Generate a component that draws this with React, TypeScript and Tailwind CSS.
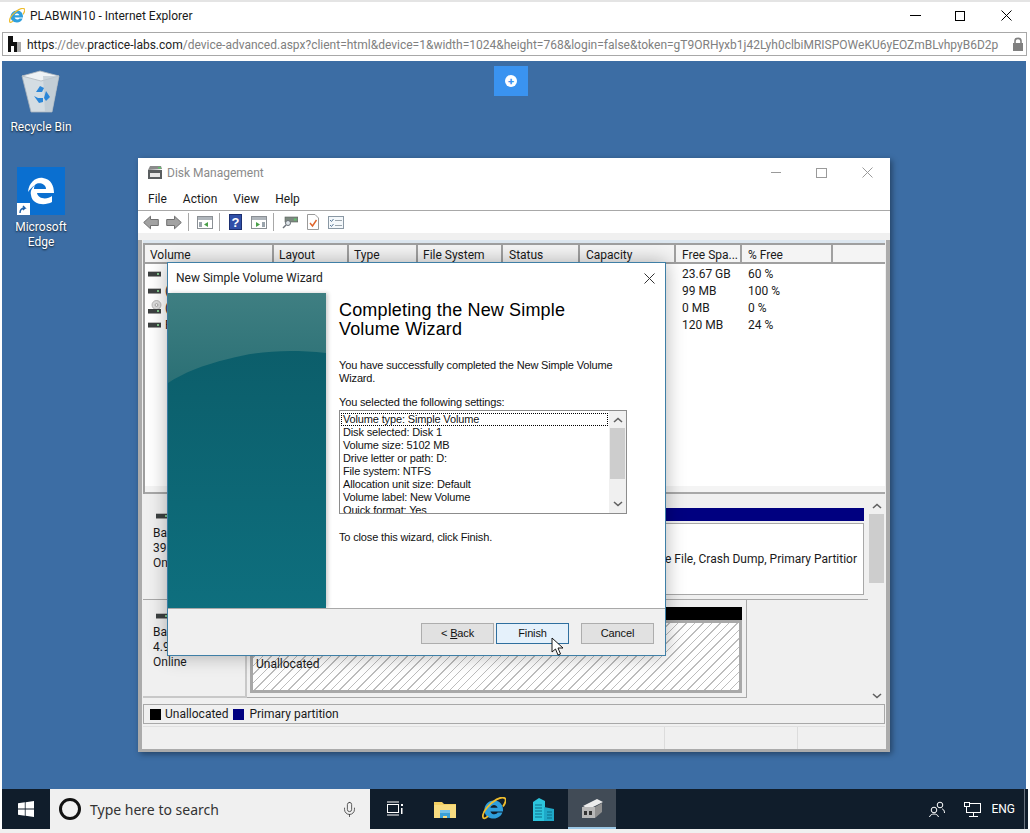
import { Mic } from "lucide-react";

const columns = [
  { name: "Volume", cell: "w-[129px] pl-[5px]" },
  { name: "Layout", cell: "w-[75px] pl-[5px]" },
  { name: "Type", cell: "w-[69px] pl-[5px]" },
  { name: "File System", cell: "w-[85px] pl-[5px]" },
  { name: "Status", cell: "w-[77px] pl-[6px]" },
  { name: "Capacity", cell: "w-[96px] pl-[6px]" },
  { name: "Free Spa...", cell: "w-[66px] pl-[6px]" },
  { name: "% Free", cell: "w-[91px] pl-[6px]" },
];

const volumes = [
  { letter: "", free: "23.67 GB", pct: "60 %", disc: false },
  { letter: "(", free: "99 MB", pct: "100 %", disc: false },
  { letter: "(", free: "0 MB", pct: "0 %", disc: true },
  { letter: "F", free: "120 MB", pct: "24 %", disc: false },
];

const settings = [
  "Disk selected: Disk 1",
  "Volume size: 5102 MB",
  "Drive letter or path: D:",
  "File system: NTFS",
  "Allocation unit size: Default",
  "Volume label: New Volume",
  "Quick format: Yes",
];

function DriveIcon() {
  return (
    <svg width="13" height="6" viewBox="0 0 13 6" className="block">
      <rect x="0" y="0" width="13" height="1" fill="#bdbdbd" />
      <rect x="0" y="1" width="13" height="4" fill="#3c4040" />
      <rect x="9" y="2" width="2" height="2" fill="#7fc48a" />
      <rect x="0" y="5" width="13" height="1" fill="#9a9a9a" />
    </svg>
  );
}

function DiscIcon() {
  return (
    <svg width="14" height="15" viewBox="0 0 14 15" className="block">
      <circle cx="8.5" cy="5" r="4.5" fill="#dcdcdc" stroke="#a0a0a0" strokeWidth="0.7" />
      <circle cx="8.5" cy="5" r="1.4" fill="#fff" stroke="#8a8a8a" strokeWidth="0.7" />
      <rect x="0" y="9" width="13" height="4" fill="#3c4040" />
      <rect x="9" y="10" width="2" height="2" fill="#7fc48a" />
      <rect x="0" y="13" width="13" height="1" fill="#9a9a9a" />
    </svg>
  );
}

function IeIcon({ size }: { size: number }) {
  return (
    <svg width={size} height={size} viewBox="0 0 20 20" className="shrink-0">
      <path d="M10 3 C5 3 2 7 2 11 C2 15 5 18 10 18 C13 18 16 16 17 13 L13 13 C12 15 8 15 7 12 L17.5 12 C18 7 15 3 10 3 Z M7 9 C8 6 12 6 13 9 Z" fill="#2f9fdc" fillRule="evenodd" />
      <path d="M5 16 C0 21 -1 15 4 9 C9 3 16 -1 19 1 C20.5 2 19.5 5 17.5 8" fill="none" stroke="#eebd2e" strokeWidth="1.5" />
    </svg>
  );
}

function RecycleBin() {
  return (
    <svg width="40" height="44" viewBox="0 0 40 44">
      <path d="M1 6 L38 6 L31 42 L10 42 Z" fill="#d4dde3" stroke="#aab4bc" strokeWidth="0.8" />
      <path d="M1 6 L19 1 L38 6 L20 11 Z" fill="#eef2f5" stroke="#b0b8be" strokeWidth="0.8" />
      <path d="M22 6 L38 6 L31 42 L24 42 Z" fill="#bcc8d0" opacity="0.7" />
      <path d="M15 22 L19 16 L23 18 L21 22 Z M25 21 L29 27 L25 31 L23 28 Z M13 26 L18 33 L22 32 L22 28 L17 28 Z" fill="#2a86d8" />
    </svg>
  );
}

function ToolbarIcons() {
  return (
    <div className="flex items-center h-[22px] pl-[5px]">
      <svg width="16" height="15" viewBox="0 0 16 15">
        <path d="M0.7 7.5 L7.5 1.2 L7.5 4.5 L15.3 4.5 L15.3 10.5 L7.5 10.5 L7.5 13.8 Z" fill="#a2a2a2" stroke="#707070" />
      </svg>
      <svg width="16" height="15" viewBox="0 0 16 15" className="ml-[7px]">
        <path d="M15.3 7.5 L8.5 1.2 L8.5 4.5 L0.7 4.5 L0.7 10.5 L8.5 10.5 L8.5 13.8 Z" fill="#a2a2a2" stroke="#707070" />
      </svg>
      <div className="w-px h-[18px] bg-[#a8a8a8] ml-[6px]" />
      <svg width="16" height="13" viewBox="0 0 16 13" className="ml-[8px]">
        <rect x="0.5" y="0.5" width="15" height="12" fill="#fff" stroke="#8a8f94" />
        <rect x="1" y="1" width="14" height="3" fill="#b0b6bc" />
        <rect x="2" y="6" width="3" height="5" fill="#9aa4ac" />
        <path d="M11 6 L11 11 L7 8.5 Z" fill="#4aa04a" />
      </svg>
      <div className="w-px h-[18px] bg-[#a8a8a8] ml-[6px]" />
      <div className="w-[13px] h-[16px] ml-[9px] bg-[#2f4fa8] border border-[#1c2f70] flex items-center justify-center text-white text-[13px] font-bold leading-none font-['Liberation_Sans',sans-serif]">
        ?
      </div>
      <svg width="16" height="13" viewBox="0 0 16 13" className="ml-[9px]">
        <rect x="0.5" y="0.5" width="15" height="12" fill="#fff" stroke="#8a8f94" />
        <rect x="1" y="1" width="14" height="3" fill="#b0b6bc" />
        <rect x="11" y="6" width="3" height="5" fill="#9aa4ac" />
        <path d="M5 6 L5 11 L9 8.5 Z" fill="#4aa04a" />
      </svg>
      <div className="w-px h-[18px] bg-[#a8a8a8] ml-[6px]" />
      <svg width="16" height="14" viewBox="0 0 16 14" className="ml-[8px]">
        <rect x="3" y="2" width="13" height="5" fill="#7d8a80" stroke="#5a625c" strokeWidth="0.6" />
        <rect x="12" y="3.5" width="2.5" height="2" fill="#5fc46a" />
        <circle cx="6" cy="8" r="2.5" fill="#dfe6ea" stroke="#6a7078" />
        <path d="M1 13 L4 10" stroke="#6a7078" strokeWidth="1.4" />
      </svg>
      <svg width="12" height="16" viewBox="0 0 12 16" className="ml-[9px]">
        <path d="M0.5 0.5 L8 0.5 L11.5 4 L11.5 15.5 L0.5 15.5 Z" fill="#fff" stroke="#9a9a9a" />
        <path d="M3 9 L5.5 12 L9.5 6" fill="none" stroke="#e0642a" strokeWidth="1.4" />
      </svg>
      <svg width="16" height="13" viewBox="0 0 16 13" className="ml-[9px]">
        <rect x="0.5" y="0.5" width="15" height="12" fill="#f4f8fb" stroke="#8a98a4" />
        <path d="M2 4 L3.5 5.5 L5.5 3 M2 9 L3.5 10.5 L5.5 8" fill="none" stroke="#5a7a9a" />
        <path d="M7 4.5 L14 4.5 M7 9.5 L14 9.5" stroke="#9aa4ac" />
      </svg>
    </div>
  );
}

function ScrollUp() {
  return (
    <svg width="10" height="6" viewBox="0 0 10 6">
      <path d="M1 5 L5 1.5 L9 5" fill="none" stroke="#606060" strokeWidth="1.6" />
    </svg>
  );
}

function ScrollDown() {
  return (
    <svg width="10" height="6" viewBox="0 0 10 6">
      <path d="M1 1 L5 4.5 L9 1" fill="none" stroke="#606060" strokeWidth="1.6" />
    </svg>
  );
}

function DiskWindow() {
  return (
    <div className="absolute left-[136px] top-[97px] w-[752px] h-[594px] bg-[#f0f0f0] flex flex-col shadow-[2px_2px_6px_rgba(0,0,0,0.4)] text-[12px] text-[#1a1a1a] font-['Roboto',sans-serif]">
      <div className="bg-white h-[29px] flex items-center pl-[9px] shrink-0">
        <svg width="16" height="15" viewBox="0 0 16 15">
          <path d="M3 1 L14 1 L15 4 L1 5 Z" fill="#8a8a8a" />
          <rect x="1" y="5" width="14" height="9" fill="#5a5e60" />
          <rect x="3" y="8" width="10" height="4" fill="#e8e8e8" />
          <rect x="11" y="2" width="3" height="1.5" fill="#5fc46a" />
        </svg>
        <span className="ml-[4px] text-[#8a8a8a]">Disk Management</span>
        <div className="ml-auto flex items-center pr-[17px]">
          <div className="w-[10px] h-px bg-[#9a9a9a] mr-[35px]" />
          <div className="w-[11px] h-[10px] border border-[#9a9a9a] mr-[35px]" />
          <svg width="11" height="11" viewBox="0 0 11 11">
            <path d="M0.5 0.5 L10.5 10.5 M10.5 0.5 L0.5 10.5" stroke="#9a9a9a" />
          </svg>
        </div>
      </div>
      <div className="bg-white h-[24px] flex items-center pl-[10px] gap-[16px] border-b border-[#a8a8a8] shrink-0">
        <span>File</span>
        <span>Action</span>
        <span>View</span>
        <span>Help</span>
      </div>
      <div className="bg-white h-[22px] shrink-0">
        <ToolbarIcons />
      </div>
      <div className="h-[7px] shrink-0" />
      <div className="flex-1 min-h-0 flex flex-col border-x-[4px] border-b-[3px] border-[#ababab] px-[1px]">
        <div className="h-[3px] bg-[#dce6ef] shrink-0" />
        <div className="h-[251px] bg-white border-t-[2px] border-l-[2px] border-[#9f9f9f] flex flex-col shrink-0">
          <div className="flex h-[19px] bg-[#f4f4f4] border-b-[2px] border-[#a0a0a0] shrink-0">
            {columns.map((c) => (
              <div key={c.name} className={`${c.cell} pt-px border-r-[2px] border-[#a0a0a0] leading-[18px] whitespace-nowrap`}>
                {c.name}
              </div>
            ))}
          </div>
          <div className="flex-1 pt-[1px] flex flex-col">
            {volumes.map((v) => (
              <div key={v.free} className="h-[17px] flex items-center">
                <div className="w-[20px] pl-[3px]">{v.disc ? <DiscIcon /> : <DriveIcon />}</div>
                <div className="w-[517px]">{v.letter}</div>
                <div className="w-[66px]">{v.free}</div>
                <div>{v.pct}</div>
              </div>
            ))}
          </div>
          <div className="h-[8px] bg-[#f4f4f4] border-b-[2px] border-[#a8a8a8]" />
        </div>
        <div className="h-[3px] shrink-0" />
        <div className="h-[203px] flex shrink-0">
          <div className="flex-1 min-w-0 flex flex-col">
            <div className="h-[103px] flex border-b border-[#a8a8a8] shrink-0">
              <div className="w-[104px] pl-[10px] pt-[16px] leading-[15px] shrink-0">
                <div className="ml-[3px]"><DriveIcon /></div>
                <div className="mt-[7px]">Basic</div>
                <div>39.97 GB</div>
                <div>Online</div>
              </div>
              <div className="flex-1 pr-[4px] pt-[11px] flex flex-col min-w-0">
                <div className="h-[13px] bg-[#000080] shrink-0" />
                <div className="h-[72px] bg-white border border-[#a8a8a8] mt-[2px] flex items-center justify-end overflow-hidden pr-[6px] shrink-0">
                  <span className="whitespace-nowrap">Page File, Crash Dump, Primary Partitior</span>
                </div>
              </div>
            </div>
            <div className="flex-1 flex min-h-0 items-start">
              <div className="w-[104px] h-[98px] pl-[10px] pt-[13px] leading-[15px] shrink-0 border-r-[2px] border-b-[2px] border-[#c8c8c8]">
                <div className="ml-[3px]"><DriveIcon /></div>
                <div className="mt-[6px]">Basic</div>
                <div>4.98 GB</div>
                <div>Online</div>
              </div>
              <div className="w-[500px] h-[98px] border-r border-b border-[#a8a8a8] pl-[3px] pr-[4px] pt-[7px] flex flex-col shrink-0">
                <div className="h-[13px] bg-black shrink-0" />
                <div className="h-[73px] border-[3px] border-[#a8a8a8] bg-[repeating-linear-gradient(135deg,#bdbdbd_0,#bdbdbd_1px,#ffffff_1px,#ffffff_6px)] pl-[3px] pt-[34px] leading-[15px]">
                  <span>Unallocated</span>
                </div>
              </div>
            </div>
          </div>
          <div className="w-[17px] flex flex-col items-center justify-between pt-[6px] pb-[1px] shrink-0">
            <ScrollUp />
            <div className="w-[15px] h-[69px] bg-[#cdcdcd] mb-auto mt-[5px]" />
            <ScrollDown />
          </div>
        </div>
        <div className="h-[4px] shrink-0" />
        <div className="h-[20px] border border-[#a8a8a8] flex items-center pl-[6px] shrink-0">
          <div className="w-[11px] h-[11px] bg-black" />
          <span className="ml-[4px]">Unallocated</span>
          <div className="w-[11px] h-[11px] bg-[#000080] ml-[5px]" />
          <span className="ml-[5px]">Primary partition</span>
        </div>
        <div className="h-[25px] mt-[2px] flex-1 flex justify-end border-t border-[#e0e0e0]">
          <div className="w-[133px] border-l border-[#dcdcdc]" />
          <div className="w-[88px] border-l border-[#dcdcdc]" />
        </div>
      </div>
    </div>
  );
}

function WizardDialog() {
  return (
    <div className="absolute left-[165px] top-[201px] w-[499px] h-[394px] bg-white border border-[#3f7fa6] flex flex-col shadow-[0_0_18px_rgba(0,0,0,0.3)] font-['Liberation_Sans',sans-serif] text-[11px] tracking-[-0.15px] text-[#111]">
      <div className="h-[30px] flex items-center pl-[8px] shrink-0">
        <span className="font-['Roboto',sans-serif] text-[12px] tracking-normal text-[#222]">New Simple Volume Wizard</span>
        <svg width="11" height="11" viewBox="0 0 11 11" className="ml-auto mr-[10px]">
          <path d="M0.5 0.5 L10.5 10.5 M10.5 0.5 L0.5 10.5" stroke="#333" />
        </svg>
      </div>
      <div className="flex-1 flex min-h-0">
        <div className="w-[158px] shrink-0 relative overflow-hidden bg-[linear-gradient(to_bottom,#0b5a66,#0e6f7e)] shadow-[2px_0_4px_rgba(0,0,0,0.2)]">
          <svg width="158" height="92" viewBox="0 0 158 92" className="absolute left-0 top-0">
            <defs>
              <linearGradient id="wave" x1="0" y1="0" x2="0" y2="1">
                <stop offset="0" stopColor="#3f7f82" />
                <stop offset="1" stopColor="#2b7075" />
              </linearGradient>
            </defs>
            <path d="M0 0 L158 0 L158 60 C120 56 90 58 60 66 C35 72 15 80 0 90 Z" fill="url(#wave)" />
          </svg>
        </div>
        <div className="flex-1 pl-[13px] pr-[38px] min-w-0">
          <h1 className="mt-[8px] w-[260px] text-[18px] tracking-[0.16px] leading-[19px] text-black">Completing the New Simple Volume Wizard</h1>
          <p className="mt-[20px] leading-[13px]">You have successfully completed the New Simple Volume Wizard.</p>
          <p className="mt-[11px] leading-[13px]">You selected the following settings:</p>
          <div className="mt-[1px] w-[288px] h-[104px] border border-[#8c8c8c] flex overflow-hidden">
            <div className="flex-1 min-w-0 pt-[2px] leading-[13px] overflow-hidden">
              <div className="border border-dotted border-black h-[13px] mx-[1px] pl-[1px] leading-[11px] whitespace-nowrap">Volume type: Simple Volume</div>
              {settings.map((s) => (
                <div key={s} className="pl-[3px] whitespace-nowrap">{s}</div>
              ))}
            </div>
            <div className="w-[17px] bg-[#f0f0f0] flex flex-col items-center justify-between py-[6px] shrink-0">
              <ScrollUp />
              <div className="w-[15px] h-[51px] bg-[#cdcdcd] mb-auto mt-[5px]" />
              <ScrollDown />
            </div>
          </div>
          <p className="mt-[17px] leading-[13px]">To close this wizard, click Finish.</p>
        </div>
      </div>
      <div className="h-[47px] bg-[#f0f0f0] border-t border-[#a8a8a8] flex items-start justify-end pt-[14px] pr-[11px] shrink-0 relative">
        <button className="w-[73px] h-[21px] bg-[#e1e1e1] border border-[#adadad] leading-[17px]">&lt; <span className="underline">B</span>ack</button>
        <button className="w-[73px] h-[21px] ml-[2px] bg-[#e5f1fb] border border-[#2f6f9f] leading-[17px]">Finish</button>
        <button className="w-[73px] h-[21px] ml-[12px] bg-[#e1e1e1] border border-[#adadad] leading-[17px]">Cancel</button>
        <svg width="13" height="19" viewBox="0 0 13 19" className="absolute left-[383px] top-[28px]">
          <path d="M1 1 L1 15 L4.5 12 L7 18 L9.5 17 L7 11 L12 11 Z" fill="#fff" stroke="#000" strokeWidth="0.9" />
        </svg>
      </div>
    </div>
  );
}

function Taskbar() {
  return (
    <div className="h-[40px] mx-[2px] bg-[#101d2b] flex items-stretch shrink-0 font-['Noto_Sans',sans-serif]">
      <div className="w-[48px] flex items-center justify-center">
        <svg width="16" height="16" viewBox="0 0 16 16">
          <path d="M0 2.3 L6.8 1.3 L6.8 7.6 L0 7.6 Z M7.6 1.2 L16 0 L16 7.6 L7.6 7.6 Z M0 8.4 L6.8 8.4 L6.8 14.7 L0 13.7 Z M7.6 8.4 L16 8.4 L16 16 L7.6 14.8 Z" fill="#fff" />
        </svg>
      </div>
      <div className="w-[320px] bg-[#f0f0f0] flex items-center pl-[9px] pr-[12px]">
        <div className="w-[22px] h-[22px] rounded-full border-[3px] border-[#111] bg-[#f0f0f0]" />
        <span className="ml-[9px] text-[14px] text-[#333]">Type here to search</span>
        <Mic size={17} strokeWidth={1} className="ml-auto text-[#222]" />
      </div>
      <div className="w-[50px] flex items-center justify-center">
        <svg width="18" height="16" viewBox="0 0 18 16">
          <rect x="1.5" y="3.5" width="11" height="8" fill="none" stroke="#fff" />
          <path d="M1 1 L13 1 M1 14 L13 14" stroke="#fff" />
          <rect x="15" y="3" width="2" height="2" fill="#fff" />
          <rect x="15" y="7" width="1.5" height="6" fill="#fff" />
        </svg>
      </div>
      <div className="w-[50px] flex items-center justify-center">
        <svg width="22" height="18" viewBox="0 0 22 18">
          <path d="M0 2 L8 2 L10 4 L22 4 L22 18 L0 18 Z" fill="#f3cf62" />
          <rect x="0" y="5" width="22" height="13" fill="#f8dc80" />
          <path d="M6 13 L16 13 L16 18 L13 18 L13 16 L9 16 L9 18 L6 18 Z" fill="#3aa0d8" />
          <rect x="6" y="10" width="10" height="3" fill="#74c0e8" />
        </svg>
      </div>
      <div className="w-[48px] flex items-center justify-center">
        <IeIcon size={24} />
      </div>
      <div className="w-[50px] flex items-center justify-center">
        <svg width="22" height="23" viewBox="0 0 22 23">
          <path d="M1 4 L7 0 L13 3 L13 23 L1 23 Z" fill="#2cc4dc" />
          <path d="M12 9 L22 11 L22 23 L12 23 Z" fill="#1fa8c8" />
          <path d="M3 7 L10 7 M3 10 L10 10 M3 13 L10 13 M3 16 L10 16 M3 19 L10 19 M15 14 L20 14 M15 17 L20 17 M15 20 L20 20" stroke="#0c6f8a" strokeWidth="1.2" />
        </svg>
      </div>
      <div className="w-[48px] bg-[#414b56] border-b-[2px] border-[#9cc8e6] flex items-center justify-center">
        <svg width="22" height="21" viewBox="0 0 22 21">
          <path d="M2 8 L16 1 L22 4 L8 11 Z" fill="#ececec" />
          <path d="M1 9 L14 9 L14 20 L1 20 Z" fill="#b8b8b8" />
          <rect x="3" y="13" width="3" height="4" fill="#333" />
          <rect x="8" y="13" width="3" height="4" fill="#333" />
          <path d="M14 9 L21 5 L21 14 L14 20 Z" fill="#8f8f8f" />
        </svg>
      </div>
      <div className="ml-auto flex items-center text-white pr-[9px]">
        <svg width="16" height="17" viewBox="0 0 16 17" className="mr-[19px]">
          <circle cx="11" cy="4" r="2.8" fill="none" stroke="#fff" />
          <circle cx="5" cy="9" r="2.8" fill="none" stroke="#fff" />
          <path d="M0.5 16 C1.5 12 8.5 12 9.5 16 M13 8 C14 8 15.5 9 15.5 12" fill="none" stroke="#fff" />
        </svg>
        <svg width="17" height="15" viewBox="0 0 17 15" className="mr-[10px]">
          <rect x="2.5" y="1.5" width="14" height="9" fill="none" stroke="#fff" />
          <rect x="0.5" y="0.5" width="5" height="4" fill="#101d2b" stroke="#fff" />
          <path d="M9.5 11 L9.5 14 M5 14.5 L14 14.5" stroke="#fff" />
        </svg>
        <span className="text-[12px] font-['Roboto',sans-serif]">ENG</span>
      </div>
      <div className="w-px bg-[#6a7480] mr-[3px]" />
    </div>
  );
}

export default function App() {
  return (
    <div className="w-[1030px] h-[833px] bg-white flex flex-col border-t-2 border-[#e4e4e4] overflow-hidden font-['Roboto',sans-serif] text-[#1a1a1a]">
      <div className="h-[27px] mb-[3px] flex items-center pl-[9px] shrink-0">
        <IeIcon size={16} />
        <span className="ml-[5px] text-[12px]">PLABWIN10 - Internet Explorer</span>
        <div className="ml-auto flex items-center pr-[18px]">
          <div className="w-[11px] h-px bg-black mr-[34px]" />
          <div className="w-[10px] h-[10px] border border-black mr-[36px]" />
          <svg width="11" height="11" viewBox="0 0 11 11">
            <path d="M0.5 0.5 L10.5 10.5 M10.5 0.5 L0.5 10.5" stroke="#000" />
          </svg>
        </div>
      </div>
      <div className="h-[24px] mx-[2px] w-[1025px] border border-[#a8a8a8] flex items-center pl-[4px] pr-[1px] shrink-0">
        <svg width="15" height="16" viewBox="0 0 15 16" className="shrink-0">
          <path d="M1 0 L6 0 L6 6 L10 6 L10 16 L7 16 L7 10 L4 10 L4 16 L1 16 Z" fill="#111" />
          <rect x="10" y="6" width="4" height="10" fill="#aaa" />
        </svg>
        <span className="ml-[5px] pt-px text-[12px] whitespace-nowrap text-[#808080]">
          <span className="text-[#222]">https</span>://dev.<span className="text-[#222]">practice-labs.com</span>/device-advanced.aspx?client=html&amp;device=1&amp;width=1024&amp;height=768&amp;login=false&amp;token=gT9ORHyxb1j42Lyh0clbiMRISPOWeKU6yEOZmBLvhpyB6D2p
        </span>
        <svg width="12" height="14" viewBox="0 0 12 14" className="ml-auto mr-[1px] shrink-0">
          <path d="M3 6 L3 4 C3 0.5 9 0.5 9 4 L9 6" fill="none" stroke="#808080" strokeWidth="1.6" />
          <rect x="1" y="6" width="10" height="8" fill="#808080" />
        </svg>
      </div>
      <div className="h-[5px] shrink-0" />
      <div className="relative mx-[2px] w-[1024px] flex-1 min-h-0 bg-[#3c6da4]">
        <div className="absolute left-[492px] top-[5px] w-[34px] h-[30px] bg-[#3a93f0] flex items-center justify-center">
          <div className="w-[12px] h-[12px] rounded-full bg-white flex items-center justify-center text-[#3a93f0] text-[11px] font-bold leading-none">+</div>
        </div>
        <div className="absolute left-[0px] top-[9px] w-[78px] flex flex-col items-center text-white text-[12px] leading-[15px] [text-shadow:0_1px_2px_rgba(0,0,0,0.8)]">
          <RecycleBin />
          <span className="mt-[6px]">Recycle Bin</span>
        </div>
        <div className="absolute left-[1px] top-[106px] w-[76px] flex flex-col items-center text-white text-[12px] leading-[15px] [text-shadow:0_1px_2px_rgba(0,0,0,0.8)]">
          <div className="w-[48px] h-[48px] bg-[#0a6fd0] relative flex items-center justify-center">
            <svg width="30" height="30" viewBox="0 0 30 30">
              <path d="M2 16 C3 6 10 1 17 2 C25 3 28 10 28 17 L11 17 C12 23 21 24 26 20 L26 26 C19 30 6 29 5 19 C4 15 6 12 9 9 C8 11 8 12 8 13 L20 13 C20 7 11 6 9 9 C6 11 4 13 2 16 Z" fill="#fff" />
            </svg>
            <div className="absolute left-0 bottom-0 w-[13px] h-[12px] bg-white flex items-center justify-center">
              <svg width="9" height="9" viewBox="0 0 9 9"><path d="M1 8 C1 5 3 3 6 3 L4 1 M6 3 L4 5" fill="none" stroke="#1c5fa8" strokeWidth="1.4" /></svg>
            </div>
          </div>
          <span className="mt-[5px]">Microsoft</span>
          <span>Edge</span>
        </div>
        <DiskWindow />
        <WizardDialog />
      </div>
      <Taskbar />
      <div className="h-[4px] bg-[#f0f0f0] shrink-0" />
    </div>
  );
}
